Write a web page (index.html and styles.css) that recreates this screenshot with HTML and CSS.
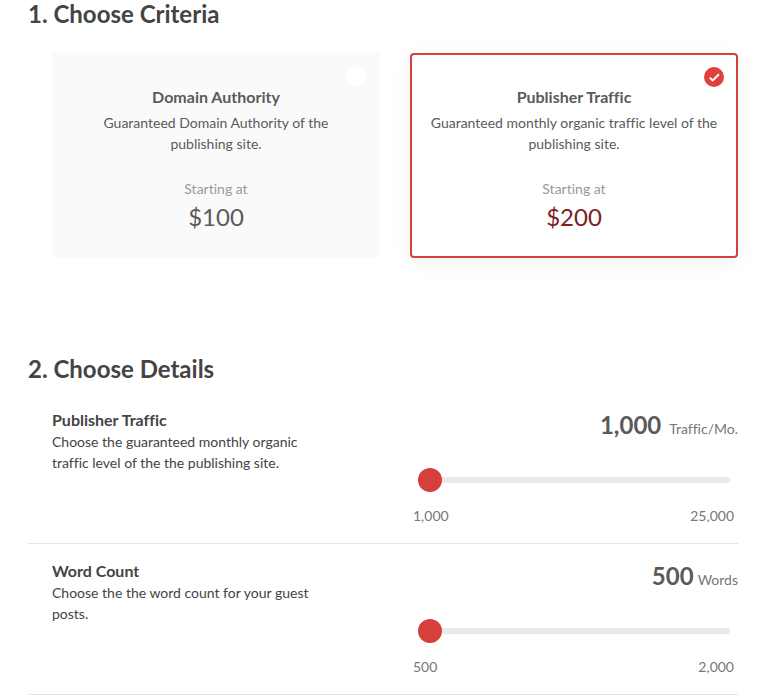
FILE: index.html
```html
<!DOCTYPE html>
<html lang="en">
  <head>
    <meta charset="UTF-8" />
    <meta name="viewport" content="width=device-width, initial-scale=1.0" />
    <title>Guest Post Order</title>
    <link rel="stylesheet" href="styles.css" />
  </head>
  <body>
    <form class="order" action="#" method="post">
      <section class="criteria">
        <h2>1. Choose Criteria</h2>
        <div class="cards">
          <label class="card">
            <input class="card-radio" type="radio" name="criteria" value="authority" />
            <span class="card-check"></span>
            <span class="card-title">Domain Authority</span>
            <span class="card-text">Guaranteed Domain Authority of the publishing site.</span>
            <span class="card-from">Starting at</span>
            <span class="card-price">$100</span>
          </label>
          <label class="card">
            <input class="card-radio" type="radio" name="criteria" value="traffic" checked />
            <span class="card-check">
              <svg viewBox="0 0 20 20" width="20" height="20" aria-hidden="true">
                <path d="M5.8 10.8 8.7 13.4 15 7.2" />
              </svg>
            </span>
            <span class="card-title">Publisher Traffic</span>
            <span class="card-text">Guaranteed monthly organic traffic level of the publishing site.</span>
            <span class="card-from">Starting at</span>
            <span class="card-price">$200</span>
          </label>
        </div>
      </section>

      <section class="details">
        <h2>2. Choose Details</h2>
        <div class="row">
          <div class="row-info">
            <label class="row-title" for="traffic">Publisher Traffic</label>
            <p>Choose the guaranteed monthly organic traffic level of the the publishing site.</p>
          </div>
          <div class="row-control">
            <div class="amount amount-wide">
              <output for="traffic">1,000</output>
              <span>Traffic/Mo.</span>
            </div>
            <input class="slider" type="range" id="traffic" name="traffic" min="1000" max="25000" step="1000" value="1000" />
            <div class="limits">
              <span>1,000</span>
              <span>25,000</span>
            </div>
          </div>
        </div>
        <div class="row">
          <div class="row-info">
            <label class="row-title" for="words">Word Count</label>
            <p>Choose the the word count for your guest posts.</p>
          </div>
          <div class="row-control">
            <div class="amount">
              <output for="words">500</output>
              <span>Words</span>
            </div>
            <input class="slider" type="range" id="words" name="words" min="500" max="2000" step="250" value="500" />
            <div class="limits">
              <span>500</span>
              <span>2,000</span>
            </div>
          </div>
        </div>
      </section>
    </form>

    <script>
      document.querySelectorAll('.slider').forEach(function (el) {
        el.addEventListener('input', function () {
          const output = el.parentElement.querySelector('output');
          output.textContent = Number(el.value).toLocaleString('en-US');
        });
      });
    </script>
  </body>
</html>
```
FILE: styles.css
```css
* {
  box-sizing: border-box;
}
body {
  margin: 0;
  background-color: #fff;
  color: #444;
  font-family: Lato, "Open Sans", sans-serif;
  font-size: 14px;
  font-variant-ligatures: none;
  line-height: 21px;
}
h2 {
  margin: 0;
  font-size: 24px;
  line-height: 28px;
}
p {
  margin: 0;
}
.order {
  padding: 0 37px 0 28px;
}

/* criteria cards */
.cards {
  display: grid;
  grid-template-columns: 1fr 1fr;
  gap: 30px;
  margin: 25px 0 97px 24px;
}
.card {
  position: relative;
  display: flex;
  flex-direction: column;
  padding: 31px 17px 21px;
  border: 2px solid #fafafa;
  border-radius: 4px;
  background-color: #fafafa;
  color: #5a5a5a;
  text-align: center;
  cursor: pointer;
}
.card:has(:checked) {
  border-color: #d5403c;
  background-color: #fff;
  box-shadow: 0 4px 20px rgba(0, 0, 0, 0.06);
}
.card-radio {
  position: absolute;
  top: 12px;
  right: 12px;
  width: 20px;
  height: 20px;
  margin: 0;
  appearance: none;
}
.card-check {
  position: absolute;
  top: 12px;
  right: 12px;
  width: 20px;
  height: 20px;
  border-radius: 50%;
  background-color: #fff;
}
.card-radio:checked + .card-check {
  background-color: #e0403c;
}
.card-check svg {
  display: block;
  fill: none;
  stroke: #fff;
  stroke-width: 2;
}
.card-title {
  margin-bottom: 5px;
  font-size: 16px;
  font-weight: 700;
}
.card-text {
  margin-bottom: 24px;
}
.card-from {
  color: #999;
}
.card-price {
  font-size: 24px;
  line-height: 36px;
}
.card:has(:checked) .card-price {
  color: #7d2124;
}

/* detail rows */
.details h2 {
  margin-bottom: 10px;
}
.row {
  display: grid;
  grid-template-columns: 1fr 1fr;
  gap: 30px;
  padding: 16px 0 17px 24px;
  border-bottom: 1px solid #e4e4e4;
}
.row-info {
  padding-right: 56px;
}
.row-title {
  display: block;
  font-size: 16px;
  font-weight: 700;
  line-height: 22px;
}
.amount {
  display: flex;
  justify-content: flex-end;
  align-items: baseline;
  gap: 4px;
  color: #777;
  line-height: 32px;
}
.amount-wide {
  gap: 8px;
}
.amount output {
  color: #5a5a5a;
  font-size: 24px;
  font-weight: 700;
}
.slider {
  display: block;
  width: calc(100% - 16px);
  height: 24px;
  margin: 23px 8px 13px;
  background: none;
  appearance: none;
  cursor: pointer;
}
.slider::-webkit-slider-runnable-track {
  height: 6px;
  border-radius: 3px;
  background-color: #e9e9e9;
}
.slider::-webkit-slider-thumb {
  width: 24px;
  height: 24px;
  margin-top: -9px;
  border-radius: 50%;
  background-color: #d5403c;
  appearance: none;
}
.limits {
  display: flex;
  justify-content: space-between;
  padding: 0 4px 0 3px;
  color: #777;
}
```
